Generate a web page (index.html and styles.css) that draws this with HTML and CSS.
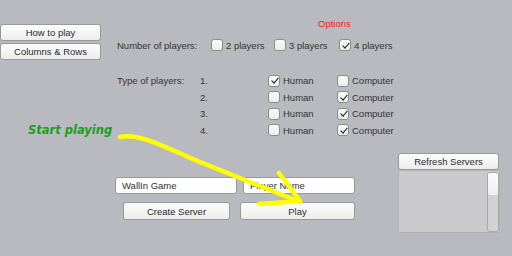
FILE: index.html
```html
<!DOCTYPE html>
<html lang="en">
<head>
  <meta charset="UTF-8" />
  <title>WallIn Menu</title>
  <link rel="stylesheet" href="styles.css">
</head>
<body>
  <div class="screen">
    <!-- Side menu -->
    <aside class="side">
      <button class="btn side-btn">How to play</button>
      <button class="btn side-btn">Columns &amp; Rows</button>
      <p class="hint">Start playing</p>
    </aside>

    <main class="main">
      <h1 class="title">Options</h1>

      <!-- Number of players -->
      <div class="count-row">
        <span class="label">Number of players:</span>
        <label class="opt"><span class="box"></span>2 players</label>
        <label class="opt"><span class="box"></span>3 players</label>
        <label class="opt"><span class="box on"></span>4 players</label>
      </div>

      <!-- Type of players -->
      <div class="types">
        <span class="label">Type of players:</span>
        <span class="num">1.</span>
        <label class="opt"><span class="box on"></span>Human</label>
        <label class="opt"><span class="box"></span>Computer</label>

        <span></span>
        <span class="num">2.</span>
        <label class="opt"><span class="box"></span>Human</label>
        <label class="opt"><span class="box on"></span>Computer</label>

        <span></span>
        <span class="num">3.</span>
        <label class="opt"><span class="box"></span>Human</label>
        <label class="opt"><span class="box on"></span>Computer</label>

        <span></span>
        <span class="num">4.</span>
        <label class="opt"><span class="box"></span>Human</label>
        <label class="opt"><span class="box on"></span>Computer</label>
      </div>

      <!-- Lobby -->
      <div class="lobby">
        <div class="create">
          <div class="fields">
            <input class="field game-field" value="WallIn Game" />
            <input class="field name-field" value="Player Name" />
          </div>
          <div class="actions">
            <button class="btn create-btn">Create Server</button>
            <button class="btn play-btn">Play</button>
          </div>
        </div>
        <div class="servers">
          <button class="btn refresh-btn">Refresh Servers</button>
          <div class="server-list">
            <div class="scroll"><div class="thumb"></div></div>
          </div>
        </div>
      </div>
    </main>

    <svg class="arrow" width="512" height="256" viewBox="0 0 512 256">
      <path d="M120,137 C140,132 170,150 200,162 S 270,190 300,202" />
      <path d="M279,173 L300,201 L259,204" />
    </svg>
  </div>
</body>
</html>
```

FILE: styles.css
```css
body {
  margin: 0;
  font-family: 'Liberation Sans', Arial, sans-serif;
  font-size: 9.5px;
  color: #333;
}

.screen {
  position: relative;
  width: 512px;
  height: 256px;
  display: flex;
  background-color: #b9bac0;
  overflow: hidden;
}

.btn {
  font-family: inherit;
  font-size: 9.5px;
  color: #2a2a2a;
  background: linear-gradient(#fdfdfd, #ececec);
  border: 1px solid #999;
  border-radius: 3px;
  padding: 0;
  margin: 0;
  height: 17px;
  cursor: pointer;
}

/* Side menu */
.side {
  width: 115px;
  flex-shrink: 0;
  padding-top: 24px;
  display: flex;
  flex-direction: column;
  gap: 2px;
}

.side-btn {
  width: 101px;
}

.hint {
  margin: 61px 0 0 28px;
  font-family: 'DejaVu Sans', sans-serif;
  font-weight: bold;
  font-style: italic;
  font-size: 11.5px;
  line-height: 14px;
  color: #17a017;
  white-space: nowrap;
}

/* Options */
.main {
  flex: 1;
  padding-top: 18px;
}

.title {
  margin: 0 0 9px 203px;
  font-size: 9.5px;
  font-weight: normal;
  line-height: 12px;
  color: #ff1414;
}

.label {
  padding-left: 2px;
  white-space: nowrap;
}

.count-row {
  display: grid;
  grid-template-columns: 96px 63px 65px auto;
  height: 12px;
  align-items: center;
}

.opt {
  display: flex;
  align-items: center;
  gap: 3px;
  white-space: nowrap;
}

.box {
  position: relative;
  width: 10px;
  height: 10px;
  flex-shrink: 0;
  background: linear-gradient(#fbfbfb, #ececec);
  border: 1px solid #8c8c8c;
  border-radius: 3px;
}

.box.on::after {
  content: '';
  position: absolute;
  left: 3.5px;
  top: 0.5px;
  width: 2.5px;
  height: 6px;
  border-right: 1.2px solid #222;
  border-bottom: 1.2px solid #222;
  transform: rotate(40deg);
}

.types {
  margin-top: 21.5px;
  display: grid;
  grid-template-columns: 85px 68px 69px auto;
  grid-auto-rows: 16.5px;
  align-items: center;
}

/* Lobby */
.lobby {
  margin-top: 14.5px;
  display: flex;
}

.create {
  width: 283px;
  padding-top: 24px;
}

.fields {
  display: flex;
  gap: 6px;
}

.field {
  box-sizing: border-box;
  height: 17px;
  padding: 0 0 0 6px;
  font-family: inherit;
  font-size: 9.5px;
  color: #333;
  background: #fdfdfd;
  border: 1px solid #999;
  border-radius: 3px;
}

.game-field {
  width: 122px;
}

.name-field {
  width: 112px;
}

.actions {
  margin-top: 8px;
  padding-left: 8px;
  display: flex;
  gap: 10px;
}

.actions .btn {
  height: 18px;
}

.create-btn {
  width: 107px;
}

.play-btn {
  width: 115px;
}

.servers {
  display: flex;
  flex-direction: column;
}

.refresh-btn {
  width: 101px;
}

.server-list {
  box-sizing: border-box;
  width: 102px;
  height: 63px;
  background: #cacacc;
  border: 1px solid #b3b3b6;
  border-radius: 2px;
  display: flex;
  justify-content: flex-end;
  padding-top: 1px;
}

.scroll {
  box-sizing: border-box;
  width: 12px;
  height: 100%;
  background: #d2d2d4;
  border: 1px solid #a9a9ac;
  border-radius: 3px;
}

.thumb {
  height: 22px;
  background: linear-gradient(#fdfdfd, #eeeeee);
  border-radius: 2px;
}

/* Yellow hand-drawn arrow */
.arrow {
  position: absolute;
  left: 0;
  top: 0;
  pointer-events: none;
}

.arrow path {
  fill: none;
  stroke: #ffff00;
  stroke-width: 4.5;
  stroke-linecap: round;
  stroke-linejoin: round;
}
```
